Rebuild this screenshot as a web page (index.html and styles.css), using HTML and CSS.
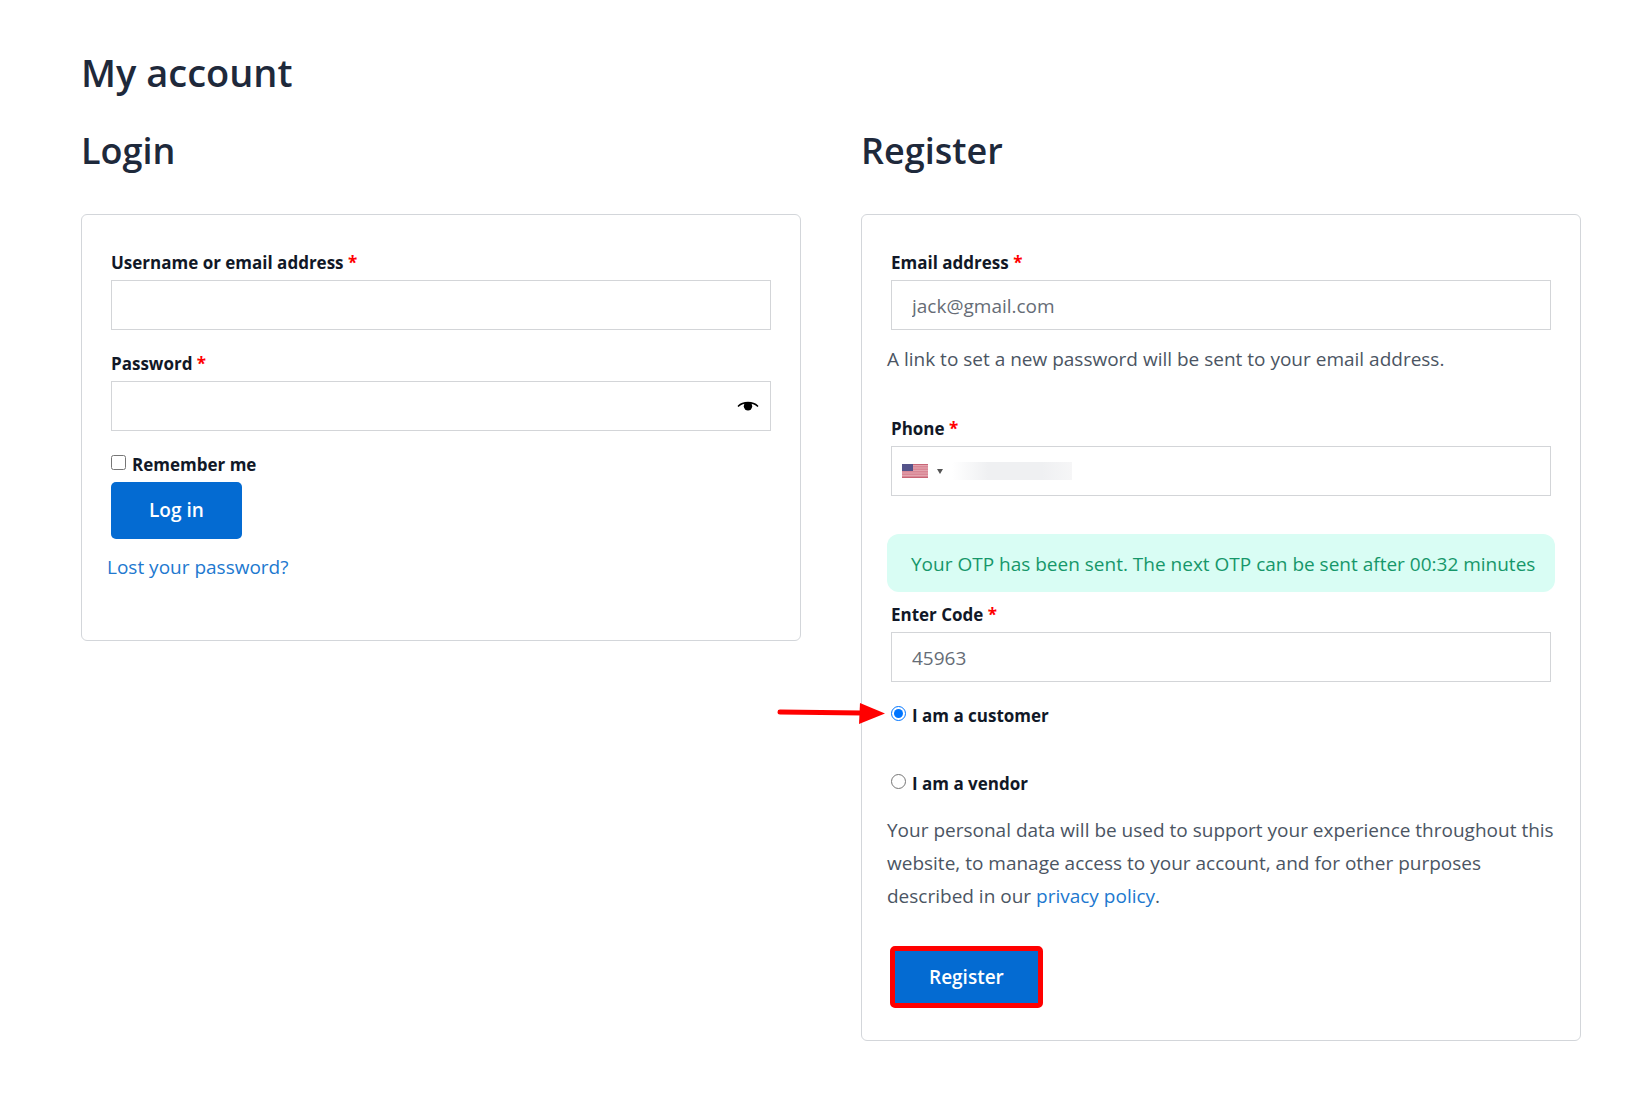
FILE: index.html
```html
<!doctype html>
<html lang="en">

<head>
    <meta charset="UTF-8" />
    <meta name="viewport" content="width=device-width, initial-scale=1.0" />
    <title>My account</title>
    <link rel="stylesheet" href="styles.css">
</head>

<body>
    <main class="account">
        <h1>My account</h1>

        <div class="columns">
            <section>
                <h2>Login</h2>
                <form class="box">
                    <div class="row">
                        <label for="username">Username or email address <span class="required">*</span></label>
                        <input type="text" id="username" class="field">
                    </div>
                    <div class="row">
                        <label for="password">Password <span class="required">*</span></label>
                        <div class="field-wrap">
                            <input type="password" id="password" class="field">
                            <button type="button" class="show-password" aria-label="Show password">
                                <svg width="22" height="10" viewBox="0 0 22 10">
                                    <path d="M1.500 5C6 .6 16 .6 20.500 5" fill="none" stroke="#000" stroke-width="1.7" stroke-linecap="round" />
                                    <circle cx="11" cy="5.200" r="4.200" fill="#000" />
                                </svg>
                            </button>
                        </div>
                    </div>
                    <div class="row login-row">
                        <label class="choice"><input type="checkbox"> Remember me</label>
                        <button type="submit" class="button">Log in</button>
                    </div>
                    <p class="lost"><a href="#">Lost your password?</a></p>
                </form>
            </section>

            <section>
                <h2>Register</h2>
                <form class="box">
                    <div class="row email-row">
                        <label for="email">Email address <span class="required">*</span></label>
                        <input type="text" id="email" class="field" value="jack@gmail.com">
                    </div>
                    <p class="hint">A link to set a new password will be sent to your email address.</p>
                    <div class="row phone-row">
                        <label for="phone">Phone <span class="required">*</span></label>
                        <div class="field-wrap">
                            <input type="tel" id="phone" class="field">
                            <div class="country">
                                <svg width="26" height="14" viewBox="0 0 26 14">
                                    <rect width="26" height="14" fill="#d98795" />
                                    <path d="M0 1.500H26M0 4H26M0 6.500H26M0 9H26M0 11.500H26" stroke="#e3a5af" stroke-width="1" />
                                    <path d="M0 .5H26M0 13.500H26" stroke="#c76576" stroke-width="1" />
                                    <rect width="11" height="7" fill="#54538a" />
                                </svg>
                                <svg width="6" height="5" viewBox="0 0 6 5">
                                    <path d="M0 0H6L3 5Z" fill="#555" />
                                </svg>
                                <span class="masked"></span>
                            </div>
                        </div>
                    </div>
                    <div class="notice">Your OTP has been sent. The next OTP can be sent after 00:32 minutes</div>
                    <div class="row">
                        <label for="code">Enter Code <span class="required">*</span></label>
                        <input type="text" id="code" class="field" value="45963">
                    </div>
                    <div class="row customer-row">
                        <label class="choice"><input type="radio" name="role" checked> I am a customer</label>
                        <svg class="arrow" width="110" height="24" viewBox="0 0 110 24">
                            <path d="M4 10L86 11" stroke="#f00" stroke-width="5" stroke-linecap="round" />
                            <path d="M84 1L109 11.500L83 22Z" fill="#f00" />
                        </svg>
                    </div>
                    <div class="row vendor-row">
                        <label class="choice"><input type="radio" name="role"> I am a vendor</label>
                    </div>
                    <p class="privacy">Your personal data will be used to support your experience throughout this website, to manage access to your account, and for other purposes described in our <a href="#">privacy policy</a>.</p>
                    <div class="row">
                        <button type="submit" class="button highlighted">Register</button>
                    </div>
                </form>
            </section>
        </div>
    </main>
</body>

</html>
```

FILE: styles.css
```css
* {
    box-sizing: border-box;
}

body {
    margin: 0;
    background: #fff;
    color: #4b5563;
    font-family: "Open Sans", "Noto Sans", sans-serif;
    font-size: 19px;
    line-height: 33px;
}

.account {
    padding: 47px 60px 48px 81px;
}

h1,
h2 {
    margin: 0;
    color: #1e293b;
    font-weight: 600;
    line-height: 50px;
}

h1 {
    font-size: 38px;
}

h2 {
    margin: 29px 0 38px;
    font-size: 36px;
}

p {
    margin: 0;
}

a {
    color: #2178cf;
    text-decoration: none;
}

.columns {
    display: grid;
    grid-template-columns: 1fr 1fr;
    gap: 60px;
    align-items: start;
}

.box {
    padding: 31px 25px 32px;
    border: 1px solid #d3d6da;
    border-radius: 6px;
}

.row {
    position: relative;
    margin-bottom: 17px;
    padding: 0 4px;
}

label {
    display: block;
    color: #111827;
    font-size: 17px;
    font-weight: 700;
    line-height: 34px;
}

.required {
    color: #f00;
}

.field {
    display: block;
    width: 100%;
    height: 50px;
    padding: 2px 20px 0;
    border: 1px solid #d3d5d8;
    border-radius: 0;
    background: #fff;
    color: #666c76;
    font: inherit;
}

.field-wrap {
    position: relative;
}

.show-password {
    position: absolute;
    top: 16px;
    right: 12px;
    display: flex;
    padding: 4px 0;
    border: 0;
    background: none;
}

.choice {
    display: flex;
    align-items: center;
    gap: 6px;
}

.choice input {
    width: 15px;
    height: 15px;
    margin: 0 0 6px;
}

.button {
    height: 57px;
    padding: 0 38px;
    border: 0;
    border-radius: 5px;
    background: #046bd2;
    color: #fff;
    font: inherit;
    font-weight: 600;
}

.login-row {
    margin-bottom: 12px;
}

.login-row .button {
    display: block;
}

.lost {
    margin-bottom: 24px;
}

.email-row {
    margin-bottom: 13px;
}

.hint {
    margin-bottom: 36px;
}

.phone-row {
    margin-bottom: 38px;
}

.country {
    position: absolute;
    top: 0;
    left: 11px;
    display: flex;
    align-items: center;
    gap: 9px;
    height: 50px;
    pointer-events: none;
}

.masked {
    width: 120px;
    height: 18px;
    background: linear-gradient(to right, #fff, #eff0f2 30%, #eff0f2 75%, #f6f6f7);
}

.notice {
    margin-bottom: 6px;
    padding: 14px 16px 11px 24px;
    border-radius: 12px;
    background: #d9fdf4;
    color: #16976a;
}

.customer-row {
    margin-bottom: 34px;
}

/* pointer to the selected role, hangs out over the box edge */
.arrow {
    position: absolute;
    top: 3px;
    right: 100%;
    margin-right: 1px;
}

.vendor-row {
    margin-bottom: 13px;
}

.privacy {
    margin-bottom: 33px;
}

.privacy + .row {
    margin-bottom: 0;
    padding: 0 3px;
}

.highlighted {
    display: block;
    height: 62px;
    padding: 0 34px;
    border: 5px solid #f00;
}
```
